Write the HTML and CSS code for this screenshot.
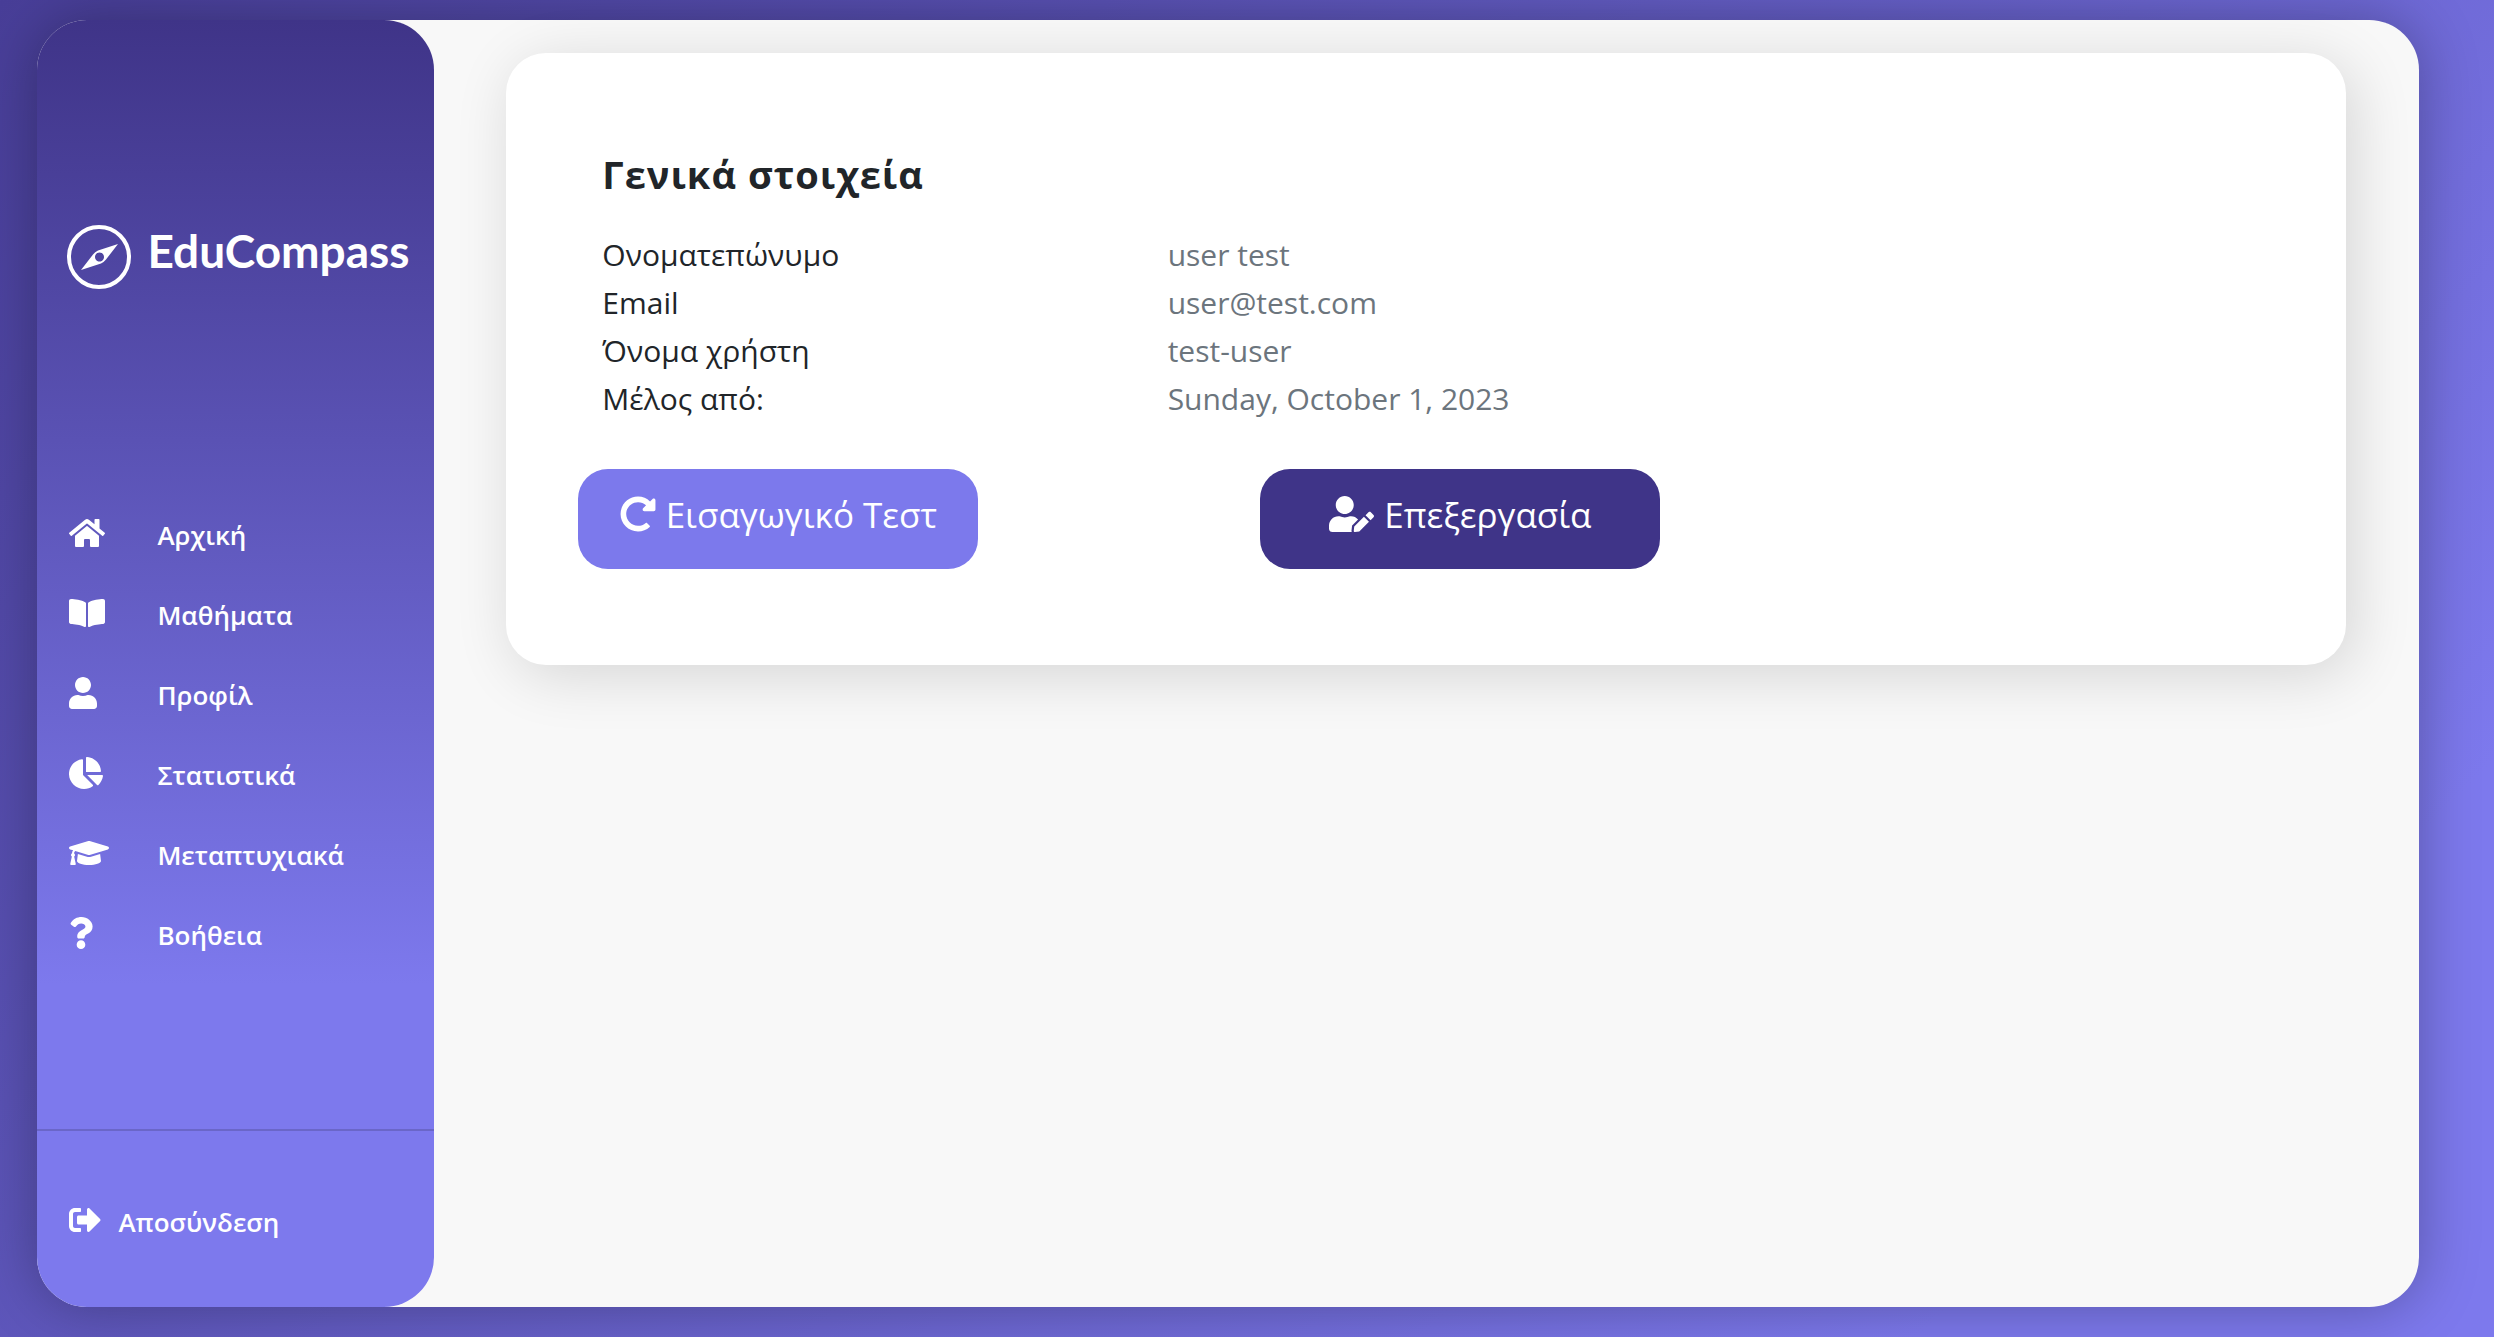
FILE: index.html
```html
<!DOCTYPE html>
<html lang="el">
<head>
<meta charset="utf-8">
<meta name="viewport" content="width=device-width, initial-scale=1">
<title>EduCompass</title>
<link rel="stylesheet" href="styles.css">
</head>
<body>
<div class="panel">
  <aside class="sidebar">
    <a class="brand" href="#">
      <svg class="brand-mark" viewBox="0 0 64 64" aria-hidden="true">
        <circle cx="32" cy="32" r="30" fill="none" stroke="#fff" stroke-width="4"/>
        <path fill="#fff" fill-rule="evenodd" d="M51 19L31 25.500Q28 27 26 29.500L14 45L34 38.500Q37 37 39 34.500ZM32.500 27.500a4.500 4.500 0 1 0 .01 0z"/>
      </svg>
      <span>EduCompass</span>
    </a>
    <nav class="menu">
      <a class="menu-item" href="#">
        <span class="menu-icon"><svg class="icon" viewBox="0 0 576 512" aria-hidden="true"><path d="M280.370 148.260L96 300.110V464a16 16 0 0 0 16 16l112.060-.290a16 16 0 0 0 15.920-16V368a16 16 0 0 1 16-16h64a16 16 0 0 1 16 16v95.640a16 16 0 0 0 16 16.050L464 480a16 16 0 0 0 16-16V300L295.670 148.260a12.190 12.190 0 0 0-15.300 0zM571.600 251.470L488 182.560V44.050a12 12 0 0 0-12-12h-56a12 12 0 0 0-12 12v72.610L318.470 43a48 48 0 0 0-61 0L4.340 251.470a12 12 0 0 0-1.600 16.900l25.500 31A12 12 0 0 0 45.150 301l235.220-193.740a12.190 12.190 0 0 1 15.300 0L530.900 301a12 12 0 0 0 16.900-1.600l25.500-31a12 12 0 0 0-1.700-16.930z"/></svg></span>
        <span>Αρχική</span>
      </a>
      <a class="menu-item" href="#">
        <span class="menu-icon"><svg class="icon" viewBox="0 0 576 512" aria-hidden="true"><path d="M542.220 32.050c-54.800 3.110-163.720 14.430-230.960 55.590-4.640 2.840-7.270 7.890-7.270 13.170v363.870c0 11.550 12.630 18.850 23.280 13.490 69.180-34.820 169.230-44.320 218.700-46.920 16.890-.890 30.020-14.430 30.020-30.660V62.750c.010-17.710-15.350-31.740-33.770-30.700zM264.730 87.640C197.500 46.480 88.580 35.170 33.780 32.050 15.360 31.010 0 45.040 0 62.750V400.600c0 16.240 13.130 29.780 30.020 30.660 49.490 2.600 149.590 12.110 218.770 46.950 10.620 5.350 23.210-1.940 23.210-13.460V100.630c0-5.290-2.620-10.140-7.270-12.990z"/></svg></span>
        <span>Μαθήματα</span>
      </a>
      <a class="menu-item" href="#">
        <span class="menu-icon"><svg class="icon" viewBox="0 0 448 512" aria-hidden="true"><path d="M224 256c70.700 0 128-57.300 128-128S294.700 0 224 0 96 57.300 96 128s57.300 128 128 128zm89.600 32h-16.700c-22.200 10.200-46.900 16-72.900 16s-50.600-5.800-72.900-16h-16.700C60.200 288 0 348.200 0 422.400V464c0 26.500 21.500 48 48 48h352c26.500 0 48-21.500 48-48v-41.600c0-74.200-60.200-134.400-134.400-134.400z"/></svg></span>
        <span>Προφίλ</span>
      </a>
      <a class="menu-item" href="#">
        <span class="menu-icon"><svg class="icon" viewBox="0 0 544 512" aria-hidden="true"><path d="M527.790 288H290.500l158.030 158.030c6.040 6.040 15.980 6.530 22.190.680 38.700-36.460 65.320-85.610 73.130-140.860 1.340-9.460-6.510-17.850-16.060-17.850zm-15.830-64.800C503.720 103.740 408.260 8.280 288.800.040 279.680-.590 272 7.100 272 16.240V240h223.770c9.140 0 16.820-7.680 16.190-16.800zM224 288V50.710c0-9.550-8.390-17.400-17.840-16.060C86.990 51.490-4.100 155.600.140 280.370 4.500 408.510 114.830 513.590 243.030 511.980c50.400-.630 96.970-16.870 135.260-44.030 7.900-5.600 8.420-17.230 1.570-24.080L224 288z"/></svg></span>
        <span>Στατιστικά</span>
      </a>
      <a class="menu-item" href="#">
        <span class="menu-icon"><svg class="icon" viewBox="0 0 640 512" aria-hidden="true"><path d="M622.340 153.200L343.400 67.500c-15.200-4.670-31.600-4.670-46.790 0L17.660 153.200c-23.540 7.230-23.540 38.360 0 45.590l48.630 14.940c-10.670 13.190-17.230 29.280-17.880 46.900C38.780 266.150 32 276.110 32 288c0 10.780 5.680 19.850 13.860 25.650L20.330 428.530C18.110 438.520 25.710 448 35.940 448h56.110c10.240 0 17.840-9.480 15.620-19.470L82.140 313.650C90.320 307.850 96 298.780 96 288c0-11.570-6.470-21.250-15.660-26.870.760-15.020 8.440-28.300 20.690-36.720L296.600 284.500c9.060 2.780 26.440 6.250 46.790 0l278.950-85.700c23.550-7.240 23.550-38.360 0-45.600zM352.790 315.090c-28.530 8.760-52.840 3.920-65.590 0l-145.020-44.550L128 384c0 35.350 85.960 64 192 64s192-28.650 192-64l-14.180-113.470-145.030 44.560z"/></svg></span>
        <span>Μεταπτυχιακά</span>
      </a>
      <a class="menu-item" href="#">
        <span class="menu-icon"><svg class="icon" viewBox="0 0 384 512" aria-hidden="true"><path d="M202.021 0C122.202 0 70.503 32.703 29.914 91.026c-7.363 10.580-5.093 25.086 5.178 32.874l43.138 32.709c10.373 7.865 25.132 6.026 33.253-4.148 25.049-31.381 43.630-49.449 82.757-49.449 30.764 0 68.816 19.799 68.816 49.631 0 22.552-18.617 34.134-48.993 51.164-35.423 19.860-82.299 44.576-82.299 106.405V320c0 13.255 10.745 24 24 24h72.471c13.255 0 24-10.745 24-24v-5.773c0-42.860 125.268-44.645 125.268-160.627C377.504 66.256 286.902 0 202.021 0zM192 373.459c-38.196 0-69.271 31.075-69.271 69.271 0 38.195 31.075 69.270 69.271 69.270s69.271-31.075 69.271-69.271-31.075-69.270-69.271-69.270z"/></svg></span>
        <span>Βοήθεια</span>
      </a>
    </nav>
    <div class="logout">
      <a class="logout-link" href="#">
        <svg class="icon" viewBox="0 0 512 512" aria-hidden="true"><path d="M497 273L329 441c-15 15-41 4.500-41-17v-96H152c-13.300 0-24-10.700-24-24v-96c0-13.300 10.700-24 24-24h136V88c0-21.400 25.900-32 41-17l168 168c9.300 9.400 9.300 24.600 0 34zM192 436v-40c0-6.600-5.400-12-12-12H96c-17.700 0-32-14.300-32-32V160c0-17.700 14.300-32 32-32h84c6.600 0 12-5.400 12-12V76c0-6.600-5.400-12-12-12H96c-53 0-96 43-96 96v192c0 53 43 96 96 96h84c6.600 0 12-5.400 12-12z"/></svg>
        <span>Αποσύνδεση</span>
      </a>
    </div>
  </aside>
  <main class="content">
    <section class="card">
      <h1 class="card-title">Γενικά στοιχεία</h1>
      <dl class="details">
        <dt>Ονοματεπώνυμο</dt><dd>user test</dd>
        <dt>Email</dt><dd>user@test.com</dd>
        <dt>Όνομα χρήστη</dt><dd>test-user</dd>
        <dt>Μέλος από:</dt><dd>Sunday, October 1, 2023</dd>
      </dl>
      <div class="actions">
        <button class="btn btn-light" type="button">
          <svg class="btn-icon" viewBox="0 0 512 512" aria-hidden="true"><path d="M256.455 8c66.269.119 126.437 26.233 170.859 68.685l35.715-35.715C478.149 25.851 504 36.559 504 57.941V192c0 13.255-10.745 24-24 24H345.941c-21.382 0-32.090-25.851-16.971-40.971l41.750-41.750c-30.864-28.899-70.801-44.907-113.230-45.273-92.398-.798-170.283 73.977-169.484 169.442C88.764 348.009 162.184 424 256 424c41.127 0 79.997-14.678 110.629-41.556 4.743-4.161 11.906-3.908 16.368.553l39.662 39.662c4.872 4.872 4.631 12.815-.482 17.433C378.202 479.813 319.926 504 256 504 119.034 504 8.001 392.967 8 256.002 7.999 119.193 119.646 7.755 256.455 8z"/></svg>
          <span>Εισαγωγικό Τεστ</span>
        </button>
        <button class="btn btn-dark" type="button">
          <svg class="btn-icon" viewBox="0 0 640 512" aria-hidden="true"><path d="M224 256c70.700 0 128-57.300 128-128S294.700 0 224 0 96 57.300 96 128s57.300 128 128 128zm89.600 32h-16.700c-22.200 10.200-46.900 16-72.900 16s-50.600-5.800-72.900-16h-16.700C60.200 288 0 348.200 0 422.400V464c0 26.500 21.500 48 48 48h274.900c-2.400-6.800-3.400-14-2.600-21.300l6.800-60.900 1.200-11.100 7.900-7.900 77.300-77.300c-24.500-27.700-60-45.500-99.900-45.500zm45.300 145.300l-6.800 61c-1.100 10.200 7.500 18.800 17.600 17.600l60.900-6.800 137.900-137.900-71.700-71.700-137.900 137.800zM633 268.900L595.100 231c-9.300-9.300-24.500-9.300-33.800 0l-37.800 37.800-4.100 4.100 71.800 71.700 41.800-41.800c9.300-9.400 9.300-24.500 0-33.900z"/></svg>
          <span>Επεξεργασία</span>
        </button>
      </div>
    </section>
  </main>
</div>
</body>
</html>
```
FILE: styles.css
```css
* {
  box-sizing: border-box;
}

body {
  margin: 0;
  min-height: 100vh;
  display: flex;
  padding: 20px 3% 30px 1.5%;
  background: linear-gradient(135deg, #483e98 0%, #7d79ed 85%);
  font-family: "Open Sans", "Noto Sans", sans-serif;
  color: #212529;
}

a {
  color: inherit;
  text-decoration: none;
}

.panel {
  flex: 1;
  display: flex;
  border-radius: 50px;
  background: #f8f8f8;
  box-shadow: 0 0 60px rgba(0, 0, 0, 0.3);
}

.sidebar {
  flex: 0 0 16.6667%;
  display: flex;
  flex-direction: column;
  border-radius: 50px;
  background: linear-gradient(180deg, #3f3488 0%, #7d79ed 75%);
  color: #fff;
  font-size: 26px;
  font-weight: 600;
  line-height: 36px;
}

.brand {
  display: flex;
  align-items: center;
  gap: 16px;
  padding: 201px 0 0 30px;
  font-family: Lato, sans-serif;
  font-size: 46px;
  font-weight: 700;
  line-height: 60px;
}

.brand span {
  padding-bottom: 12px;
}

.brand-mark {
  width: 64px;
  height: 64px;
}

.icon {
  display: block;
  height: 32px;
  fill: currentColor;
}

.menu {
  display: flex;
  flex-direction: column;
  gap: 44px;
  margin-top: 224px;
  padding-left: 32px;
}

.menu-item {
  display: grid;
  grid-template-columns: 88px 1fr;
}

.logout {
  margin-top: auto;
  padding: 73px 32px 67px;
  border-top: 2px solid #6a66c8;
}

.logout-link {
  display: flex;
  gap: 17px;
}

.content {
  flex: 1;
  padding: 33px 73px 33px 72px;
}

.card {
  padding: 96px 72px;
  border-radius: 40px;
  background: #fff;
  box-shadow: 8px 10px 60px rgba(0, 0, 0, 0.14);
}

.card-title {
  margin: 0 0 32px;
  padding-left: 24px;
  font-size: 38px;
  font-weight: 700;
  line-height: 50px;
  letter-spacing: 1px;
}

.details {
  display: grid;
  grid-template-columns: 1fr 2fr;
  margin: 0 0 46px;
  font-size: 30px;
  line-height: 48px;
}

.details dt,
.details dd {
  margin: 0;
  padding-left: 24px;
}

.details dd {
  color: #6c757d;
}

.actions {
  display: flex;
  gap: 282px;
}

.btn {
  width: 400px;
  height: 100px;
  display: flex;
  align-items: center;
  justify-content: center;
  gap: 10px;
  padding: 0 0 10px;
  border: 0;
  border-radius: 30px;
  color: #fff;
  font-family: inherit;
  font-size: 35px;
}

.btn-light {
  background: #7c79ec;
}

.btn-dark {
  background: #3f3488;
}

.btn-icon {
  height: 36px;
  fill: currentColor;
}
```
